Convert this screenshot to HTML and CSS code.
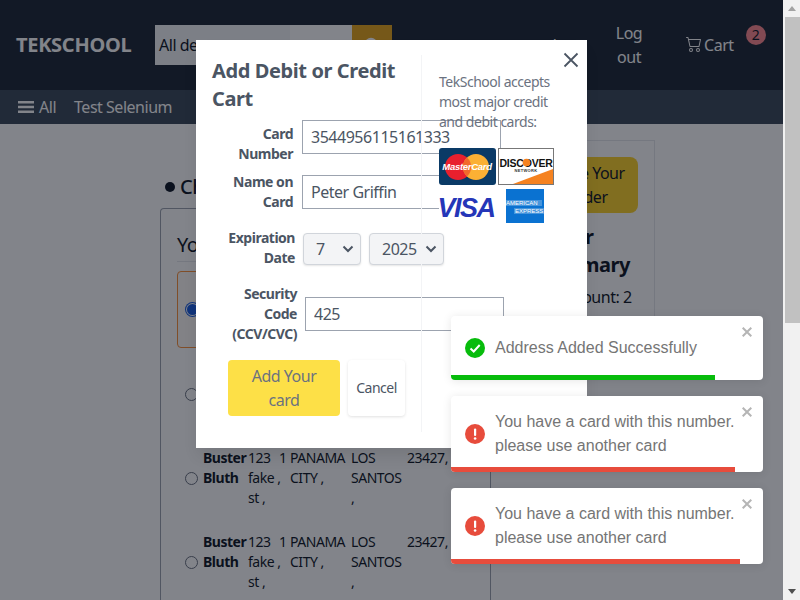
FILE: index.html
```html
<!DOCTYPE html>
<html lang="en">
<head>
<meta charset="utf-8">
<title>TekSchool checkout</title>
<link rel="stylesheet" href="styles.css">
</head>
<body>
<div class="app">
  <div class="page">
    <header class="topbar">
      <div class="logo">TEKSCHOOL</div>
      <div class="search">
        <div class="search-select">All departments</div>
        <div class="search-input"></div>
        <div class="search-btn"><svg viewBox="0 0 16 16" width="16" height="16"><circle cx="7" cy="7" r="5" fill="none" stroke="#fff" stroke-width="2.400"/><path d="M10.500 10.500 15 15" stroke="#fff" stroke-width="2.400"/></svg></div>
      </div>
      <nav class="topnav">
        <span class="nav-account">orders</span>
        <span class="nav-logout">Log out</span>
        <span class="nav-cart">
          <svg class="cart-icon" viewBox="0 0 16 16" width="16" height="16"><path d="M0 1.5A.5.5 0 0 1 .5 1H2a.5.5 0 0 1 .49.4L2.89 3H14.5a.5.5 0 0 1 .49.6l-1.5 7a.5.5 0 0 1-.49.4H4a.5.5 0 0 1-.49-.4L1.61 2H.5a.5.5 0 0 1-.5-.5zM3.1 4l1.3 6h8.2l1.28-6H3.1zM5 12a2 2 0 1 0 0 4 2 2 0 0 0 0-4zm7 0a2 2 0 1 0 0 4 2 2 0 0 0 0-4zm-7 1a1 1 0 1 1 0 2 1 1 0 0 1 0-2zm7 0a1 1 0 1 1 0 2 1 1 0 0 1 0-2z" fill="currentColor"/></svg>
          Cart
        </span>
        <span class="badge">2</span>
      </nav>
    </header>
    <div class="subnav">
      <span class="all">
        <svg class="burger" viewBox="0 0 16 14" width="16" height="14"><path d="M0 1h16v2.4H0zM0 5.8h16v2.4H0zM0 10.6h16V13H0z" fill="currentColor"/></svg>
        All
      </span>
      <span class="sub-link">Test Selenium</span>
    </div>
    <main class="main">
      <section class="left-col">
        <h1 class="check-title"><span class="dot"></span>Checkout</h1>
        <div class="address-card">
          <h2 class="addr-title">Your addresses</h2>
          <div class="addr-row addr-selected">
            <span class="radio radio-on"></span>
            <div class="addr-grid"><b>Buster Bluth</b><span class="nw">123<br>fake ,<br>st ,</span><span>1</span><span class="nw">PANAMA<br>CITY ,</span><span class="nw">LOS<br>SANTOS<br>,</span><span>23427,</span></div>
          </div>
          <div class="addr-row addr-second">
            <span class="radio"></span>
            <div class="addr-grid"><b>Buster Bluth</b><span class="nw">123<br>fake ,<br>st ,</span><span>1</span><span class="nw">PANAMA<br>CITY ,</span><span class="nw">LOS<br>SANTOS<br>,</span><span>23427,</span></div>
          </div>
          <div class="addr-row">
            <span class="radio"></span>
            <div class="addr-grid"><b>Buster Bluth</b><span class="nw">123<br>fake ,<br>st ,</span><span>1</span><span class="nw">PANAMA<br>CITY ,</span><span class="nw">LOS<br>SANTOS<br>,</span><span>23427,</span></div>
          </div>
          <div class="addr-row">
            <span class="radio"></span>
            <div class="addr-grid"><b>Buster Bluth</b><span class="nw">123<br>fake ,<br>st ,</span><span>1</span><span class="nw">PANAMA<br>CITY ,</span><span class="nw">LOS<br>SANTOS<br>,</span><span>23427,</span></div>
          </div>
        </div>
      </section>
      <aside class="summary">
        <div class="place-btn">Place Your order</div>
        <h2 class="sum-title">Order Summary</h2>
        <p class="sum-line">Item count: 2</p>
      </aside>
    </main>
  </div>
  <div class="scrollbar">
    <div class="sb-btn"><span class="arrow-up"></span></div>
    <div class="sb-thumb"></div>
    <div class="sb-track"></div>
    <div class="sb-btn"><span class="arrow-down"></span></div>
  </div>

  <div class="overlay"></div>

  <div class="modal">
    <div class="modal-form">
      <h2 class="modal-title">Add Debit or Credit Cart</h2>
      <div class="row row-card">
        <label class="lbl">Card Number</label>
        <input class="field" type="text" value="3544956115161333">
      </div>
      <div class="row row-name">
        <label class="lbl">Name on Card</label>
        <input class="field" type="text" value="Peter Griffin">
      </div>
      <div class="row row-exp">
        <label class="lbl lbl-exp">Expiration Date</label>
        <div class="sel sel-month"><span>7</span><svg viewBox="0 0 12 8" width="12" height="8"><path d="M1.5 1.5 6 6l4.5-4.5" fill="none" stroke="currentColor" stroke-width="2"/></svg></div>
        <div class="sel sel-year"><span>2025</span><svg viewBox="0 0 12 8" width="12" height="8"><path d="M1.5 1.5 6 6l4.5-4.5" fill="none" stroke="currentColor" stroke-width="2"/></svg></div>
      </div>
      <div class="row row-sec">
        <label class="lbl lbl-sec">Security Code (CCV/CVC)</label>
        <input class="field" type="text" value="425">
      </div>
      <div class="actions">
        <button class="btn-add" type="button">Add Your card</button>
        <button class="btn-cancel" type="button">Cancel</button>
      </div>
    </div>
    <div class="modal-side">
      <p class="accepts">TekSchool accepts most major credit and debit cards:</p>
      <div class="cards">
        <svg class="card-svg" viewBox="0 0 57 37" width="57" height="37"><rect width="57" height="37" rx="3" fill="#0a3a66"/><circle cx="19" cy="19" r="13" fill="#e8202e"/><circle cx="37" cy="19" r="13" fill="#fbb034"/><path d="M28 9.500a13 13 0 0 1 0 19 13 13 0 0 1 0-19z" fill="#f26a2c"/><text x="28" y="22" class="mc-text">MasterCard</text></svg>
        <svg class="card-svg" viewBox="0 0 56 37" width="56" height="37"><rect x=".5" y=".5" width="55" height="36" fill="#fff" stroke="#777"/><path d="M15 36 55 21v15z" fill="#f58220"/><text x="28" y="18.500" class="disc-text">DISCOVER</text><circle cx="28.500" cy="14.500" r="3.800" fill="#f58220"/><text x="28" y="23.500" class="disc-sub">NETWORK</text></svg>
        <svg class="card-svg" viewBox="0 0 57 34" width="57" height="34"><text x="27" y="28" class="visa-text">VISA</text></svg>
        <svg class="card-svg amex" viewBox="0 0 38 34" width="38" height="34"><rect width="38" height="34" fill="#0a72d1"/><rect y="11" width="36" height="6" fill="#fff" opacity=".25"/><text x="0" y="16" class="amex-text">AMERICAN</text><rect x="8" y="19" width="30" height="6" fill="#fff" opacity=".25"/><text x="9" y="24" class="amex-text">EXPRESS</text></svg>
      </div>
    </div>
    <svg class="modal-close" viewBox="0 0 16 16" width="16" height="16"><path d="M1.5 1.5l13 13M14.5 1.500l-13 13" stroke="currentColor" stroke-width="1.8" fill="none"/></svg>
  </div>

  <div class="toasts">
    <div class="toast toast-one">
      <div class="toast-body">
        <svg class="toast-icon" viewBox="0 0 20 20" width="20" height="20"><circle cx="10" cy="10" r="10" fill="#07bc0c"/><path d="M5.500 10.500 8.700 13.500 14.700 7" fill="none" stroke="#fff" stroke-width="2"/></svg>
        <div class="toast-text">Address Added Successfully</div>
        <svg class="toast-x" viewBox="0 0 10 10" width="10" height="10"><path d="M.7.7l8.600 8.600M9.300.7.7 9.300" stroke="currentColor" stroke-width="2" fill="none"/></svg>
      </div>
      <div class="bar bar-green" style="width:264px"></div>
    </div>
    <div class="toast">
      <div class="toast-body">
        <svg class="toast-icon" viewBox="0 0 20 20" width="20" height="20"><circle cx="10" cy="10" r="10" fill="#e74c3c"/><rect x="9" y="4.500" width="2.200" height="7.500" rx="1" fill="#fff"/><circle cx="10.100" cy="14.500" r="1.300" fill="#fff"/></svg>
        <div class="toast-text">You have a card with this number. please use another card</div>
        <svg class="toast-x" viewBox="0 0 10 10" width="10" height="10"><path d="M.7.7l8.600 8.600M9.300.7.7 9.300" stroke="currentColor" stroke-width="2" fill="none"/></svg>
      </div>
      <div class="bar bar-red" style="width:284px"></div>
    </div>
    <div class="toast">
      <div class="toast-body">
        <svg class="toast-icon" viewBox="0 0 20 20" width="20" height="20"><circle cx="10" cy="10" r="10" fill="#e74c3c"/><rect x="9" y="4.500" width="2.200" height="7.500" rx="1" fill="#fff"/><circle cx="10.100" cy="14.500" r="1.300" fill="#fff"/></svg>
        <div class="toast-text">You have a card with this number. please use another card</div>
        <svg class="toast-x" viewBox="0 0 10 10" width="10" height="10"><path d="M.7.7l8.600 8.600M9.300.7.7 9.300" stroke="currentColor" stroke-width="2" fill="none"/></svg>
      </div>
      <div class="bar bar-red" style="width:289px"></div>
    </div>
  </div>
</div>
</body>
</html>
```
FILE: styles.css
```css
* { box-sizing: border-box; }
html, body { margin: 0; padding: 0; height: 100%; overflow: hidden; }
body {
  font-family: "Noto Sans", sans-serif;
  font-size: 16px;
  line-height: 24px;
  letter-spacing: -0.03em;
  color: #111827;
  background: #fff;
}
.app { position: relative; display: flex; width: 800px; height: 600px; overflow: hidden; }
.page { flex: 1; min-width: 0; display: flex; flex-direction: column; }

/* top bar */
.topbar {
  height: 90px;
  flex: none;
  background: #1f2937;
  color: #fff;
  display: flex;
  align-items: center;
  padding-left: 16px;
}
.logo { width: 139px; font-size: 20px; font-weight: 700; letter-spacing: -0.015em; }
.search { display: flex; height: 40px; width: 237px; }
.search-select { width: 135px; padding: 8px 4px; background: #f3f4f6; color: #111827; overflow: hidden; white-space: nowrap; }
.search-input { width: 62px; background: #fff; }
.search-btn { width: 40px; background: #e7a61c; display: flex; align-items: center; justify-content: center; }
.topnav { flex: 1; display: flex; align-items: center; }
.nav-account { margin-left: 140px; width: 77px; }
.nav-logout { width: 40px; text-align: center; }
.nav-cart { margin-left: 37px; display: flex; align-items: center; gap: 2px; }
.cart-icon { margin-top: -2px; }
.badge {
  width: 20px; height: 20px; margin-left: 12px; margin-top: -20px;
  border-radius: 50%;
  background: #ff8a90;
  color: #111827;
  text-align: center;
  font-size: 14px;
  line-height: 20px;
}

/* sub nav */
.subnav {
  height: 34px;
  flex: none;
  background: #3d4a5a;
  color: #fff;
  display: flex;
  align-items: center;
  padding-left: 18px;
}
.all { display: flex; align-items: center; gap: 5px; }
.sub-link { margin-left: 18px; }

/* main */
.main { flex: 1; min-height: 0; display: flex; padding: 16px 0 0 160px; }
.left-col { width: 331px; flex: none; display: flex; flex-direction: column; }
.check-title { display: flex; align-items: center; margin: 30px 0 4px; font-size: 20px; line-height: 28px; font-weight: 500; height: 34px; }
.dot { width: 10px; height: 10px; margin: 0 5px 0 5px; border-radius: 50%; background: #111827; }
.address-card { flex: 1; border: 1px solid #9ca3af; border-bottom: 0; border-radius: 4px 4px 0 0; padding: 20px 16px 0; }
.addr-title { margin: 0; padding-top: 2px; font-size: 20px; line-height: 28px; font-weight: 400; border-bottom: 1px solid #e5e7eb; height: 33px; }
.addr-row { display: flex; align-items: center; height: 60px; margin-top: 24px; font-size: 14px; line-height: 20px; padding-left: 8px; }
.addr-selected { height: 77px; margin-top: 9px; border: 1px solid #fb923c; border-radius: 4px; padding-left: 8px; background: #fffaf6; }
.addr-second { margin-top: 16px; }
.radio { flex: none; width: 13px; height: 13px; margin-right: 5px; border: 1px solid #6b7280; border-radius: 50%; background: #fff; }
.radio-on { width: 11px; height: 11px; margin: 0 6px 0 1px; border: 0; background: #1d5fe0; box-shadow: 0 0 0 1px #fff, 0 0 0 2px #1d5fe0; }
.addr-grid { display: grid; grid-template-columns: 45px 31px 11px 61px 56px auto; align-items: start; }
.nw { white-space: nowrap; }

/* summary */
.summary { width: 134px; height: 240px; flex: none; margin-left: 30px; padding: 16px 16px 0; border: 1px solid #e5e7eb; }
.place-btn { height: 56px; width: 100px; padding: 4px 6px; background: #fcd22a; border-radius: 8px; text-align: center; }
.sum-title { margin: 10px 0 0; font-size: 20px; line-height: 28px; font-weight: 700; }
.sum-line { margin: 6px 0 0; }

/* scrollbar */
.scrollbar { width: 17px; flex: none; display: flex; flex-direction: column; background: #f1f1f1; }
.sb-btn { height: 17px; flex: none; display: flex; align-items: center; justify-content: center; }
.arrow-up { border: 4px solid transparent; border-top: 0; border-bottom: 5px solid #a3a3a3; }
.arrow-down { border: 4px solid transparent; border-bottom: 0; border-top: 5px solid #505050; }
.sb-thumb { height: 306px; flex: none; margin-left: 2px; background: #c1c1c1; }
.sb-track { flex: 1; }

/* overlay & modal */
.overlay { position: absolute; left: 0; top: 0; width: 783px; height: 600px; background: rgba(5, 10, 22, 0.5); }
.modal {
  position: absolute;
  left: 196px; top: 40px;
  width: 391px; height: 408px;
  display: flex;
  padding: 15px 0 16px;
  background: #fff;
  color: #4b5563;
  box-shadow: 0 10px 15px -3px rgba(0,0,0,.1);
}
.modal-form { width: 225px; flex: none; padding-left: 16px; }
.modal-title { margin: 2px 0 0; width: 200px; font-size: 20px; line-height: 28px; font-weight: 700; letter-spacing: -0.02em; color: #4b5563; }
.row { display: flex; }
.lbl { width: 81px; flex: none; text-align: right; font-size: 14px; line-height: 20px; font-weight: 700; }
.lbl-exp { width: 83px; }
.lbl-sec { width: 85px; }
.field {
  flex: none;
  width: 199px; height: 34px;
  padding: 0 8px;
  border: 1px solid #9ca3af;
  background: #fff;
  color: #4b5563;
  font: inherit;
  letter-spacing: inherit;
}
.row-card { margin-top: 7px; gap: 9px; align-items: flex-start; }
.row-card .lbl { padding-top: 4px; }
.row-name { margin-top: 8px; gap: 9px; }
.row-name .field { margin-top: 3px; }
.row-exp { margin-top: 16px; gap: 8px; }
.row-sec { margin-top: 16px; gap: 8px; }
.row-sec .field { margin-top: 13px; }
.sel {
  flex: none;
  height: 32px;
  margin-top: 5px;
  display: flex;
  align-items: center;
  justify-content: space-between;
  padding: 0 6px 0 12px;
  border: 1px solid #d1d5db;
  border-radius: 4px;
  background: #f3f4f6;
  box-shadow: 0 1px 2px rgba(0,0,0,.1);
  color: #4b5563;
}
.sel-month { width: 58px; }
.sel-year { width: 75px; }
.sel svg { flex: none; }
.actions { display: flex; gap: 8px; margin: 16px 0 0 16px; }
.btn-add, .btn-cancel { height: 56px; border: 0; border-radius: 4px; padding: 0 8px; font: inherit; letter-spacing: inherit; color: #6b7280; }
.btn-add { width: 112px; background: #fde047; }
.btn-cancel { width: 57px; background: #fff; font-size: 14px; box-shadow: 0 1px 3px rgba(0,0,0,.12); color: #4b5563; }
.modal-side { position: relative; width: 166px; flex: none; border-left: 1px solid #f3f4f6; padding: 17px 0 0 17px; }
.accepts { margin: 0; width: 118px; font-size: 14px; line-height: 20px; color: #6b7280; }
.cards { display: grid; grid-template-columns: 59px 56px; row-gap: 4px; margin-top: 16px; width: 116px; background: #fff; }
.card-svg { display: block; }
.amex { margin-left: 8px; }
.mc-text { font-family: "Liberation Sans", sans-serif; font-size: 9.5px; font-weight: 700; font-style: italic; fill: #fff; text-anchor: middle; letter-spacing: -0.3px; }
.disc-text { font-family: "Liberation Sans", sans-serif; font-size: 10.5px; font-weight: 700; fill: #111; text-anchor: middle; letter-spacing: -0.2px; }
.disc-sub { font-family: "Liberation Sans", sans-serif; font-size: 4px; font-weight: 700; fill: #333; text-anchor: middle; letter-spacing: .3px; }
.visa-text { font-family: "Liberation Sans", sans-serif; font-size: 27px; font-weight: 700; font-style: italic; fill: #2536b8; text-anchor: middle; letter-spacing: -1.5px; }
.amex-text { font-family: "Liberation Sans", sans-serif; font-size: 6px; fill: #fff; letter-spacing: 0; }
.modal-close { position: absolute; left: 367px; top: 12px; color: #4b5563; }

/* toasts */
.toasts { position: absolute; left: 451px; top: 316px; width: 312px; display: flex; flex-direction: column; gap: 16px; font-family: "Liberation Sans", sans-serif; letter-spacing: 0; }
.toast { position: relative; background: #fff; border-radius: 4px; overflow: hidden; box-shadow: 0 1px 10px rgba(0,0,0,.1); }
.toast-body { display: flex; align-items: center; gap: 10px; padding: 14px 14px 9px; color: #757575; }
.toast-one .toast-body { padding-top: 20px; padding-bottom: 15px; }
.toast-icon { flex: none; }
.toast-text { width: 245px; }
.toast-x { position: absolute; right: 11px; top: 11px; color: #b5b5b5; }
.bar { height: 5px; }
.bar-green { background: #07bc0c; }
.bar-red { background: #e74c3c; }
```
